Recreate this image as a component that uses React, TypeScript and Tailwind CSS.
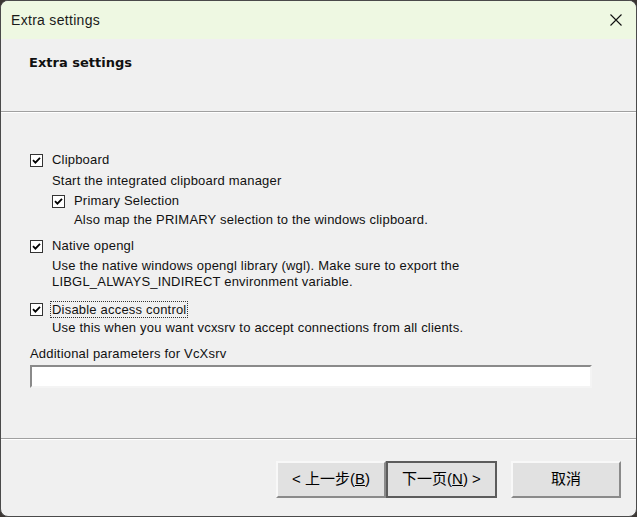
import React from 'react';

const sans = { fontFamily: '"Liberation Sans", "Noto Sans CJK SC", sans-serif' };

function Check() {
  return (
    <span className="w-[13px] h-[13px] border border-[#333] bg-white flex items-center justify-center shrink-0">
      <svg width="9" height="9" viewBox="0 0 9 9">
        <path d="M1 4.2 L3.4 6.6 L8 1.8" fill="none" stroke="#000" strokeWidth="1.8" />
      </svg>
    </span>
  );
}

function Row({ label, focus = false }: { label: string; focus?: boolean }) {
  return (
    <div className="flex items-center h-4 gap-[9px]">
      <Check />
      <span className={focus ? 'outline outline-1 outline-dotted outline-[#333] outline-offset-0 px-[1px] -ml-[1px] leading-[15px]' : ''}>
        {label}
      </span>
    </div>
  );
}

function Desc({ children }: { children: React.ReactNode }) {
  return <div className="h-4 leading-4 whitespace-nowrap">{children}</div>;
}

function Button({ children, primary = false }: { children: React.ReactNode; primary?: boolean }) {
  return (
    <button
      className={
        'h-[37px] bg-[#e1e1e1] flex items-center justify-center text-[15px] text-black ' +
        (primary
          ? 'border-2 border-[#5c5c5c] w-[111px]'
          : 'border-2 border-t-[#f8f8f8] border-l-[#f8f8f8] border-r-[#8a8a8a] border-b-[#8a8a8a] w-[110px]')
      }
      style={sans}
    >
      {children}
    </button>
  );
}

export default function App() {
  return (
    <div className="w-[637px] h-[517px] bg-[#3b3633] text-black" style={sans}>
      <div className="w-full h-full rounded-[8px] border border-[#4a4a4a] bg-[#f0f0f0] overflow-hidden flex flex-col">
        {/* title bar */}
        <div className="h-[38px] bg-[#eef8e2] flex items-center justify-between pl-[10px] pr-[14px] shrink-0">
          <span className="text-[14px] tracking-[0.3px] text-[#1a1a1a]">Extra settings</span>
          <svg width="12" height="12" viewBox="0 0 12 12">
            <path d="M0.5 0.5 L11.5 11.5 M11.5 0.5 L0.5 11.5" stroke="#111" strokeWidth="1.1" />
          </svg>
        </div>

        {/* header */}
        <div className="h-[72px] shrink-0 pl-[28px] pt-[14px]">
          <div className="text-[13px] font-bold text-[#111]" style={{ fontFamily: '"DejaVu Sans", sans-serif' }}>
            Extra settings
          </div>
        </div>
        <div className="h-[1px] bg-[#a0a0a0] shrink-0" />
        <div className="h-[1px] bg-white shrink-0" />

        {/* content */}
        <div className="flex-1 pl-[29px] pt-[39px] text-[13px] tracking-[0.2px] text-[#111]">
          <Row label="Clipboard" />
          <div className="pl-[22px] mt-[5px]">
            <Desc>Start the integrated clipboard manager</Desc>
            <div className="mt-[4px]">
              <Row label="Primary Selection" />
            </div>
            <div className="pl-[22px] mt-[3px]">
              <Desc>Also map the PRIMARY selection to the windows clipboard.</Desc>
            </div>
          </div>

          <div className="mt-[10px]">
            <Row label="Native opengl" />
          </div>
          <div className="pl-[22px] mt-[4px]">
            <Desc>Use the native windows opengl library (wgl). Make sure to export the</Desc>
            <Desc>LIBGL_ALWAYS_INDIRECT environment variable.</Desc>
          </div>

          <div className="mt-[11px]">
            <Row label="Disable access control" focus />
          </div>
          <div className="pl-[22px] mt-[3px]">
            <Desc>Use this when you want vcxsrv to accept connections from all clients.</Desc>
          </div>

          <div className="mt-[10px]">
            <Desc>Additional parameters for VcXsrv</Desc>
          </div>
          <div className="mt-[3px] w-[562px] h-[23px] bg-white border-2 border-t-[#8a8a8a] border-l-[#8a8a8a] border-r-[#f4f4f4] border-b-[#f4f4f4]" />
        </div>

        <div className="h-[1px] bg-[#a0a0a0] shrink-0" />
        <div className="h-[1px] bg-white shrink-0" />

        {/* footer */}
        <div className="h-[76px] shrink-0 flex items-start pt-[21px] pl-[275px]">
          <Button>
            &lt; 上一步(<span className="underline">B</span>)
          </Button>
          <Button primary>
            下一页(<span className="underline">N</span>) &gt;
          </Button>
          <div className="w-[14px]" />
          <Button>取消</Button>
        </div>
      </div>
    </div>
  );
}
